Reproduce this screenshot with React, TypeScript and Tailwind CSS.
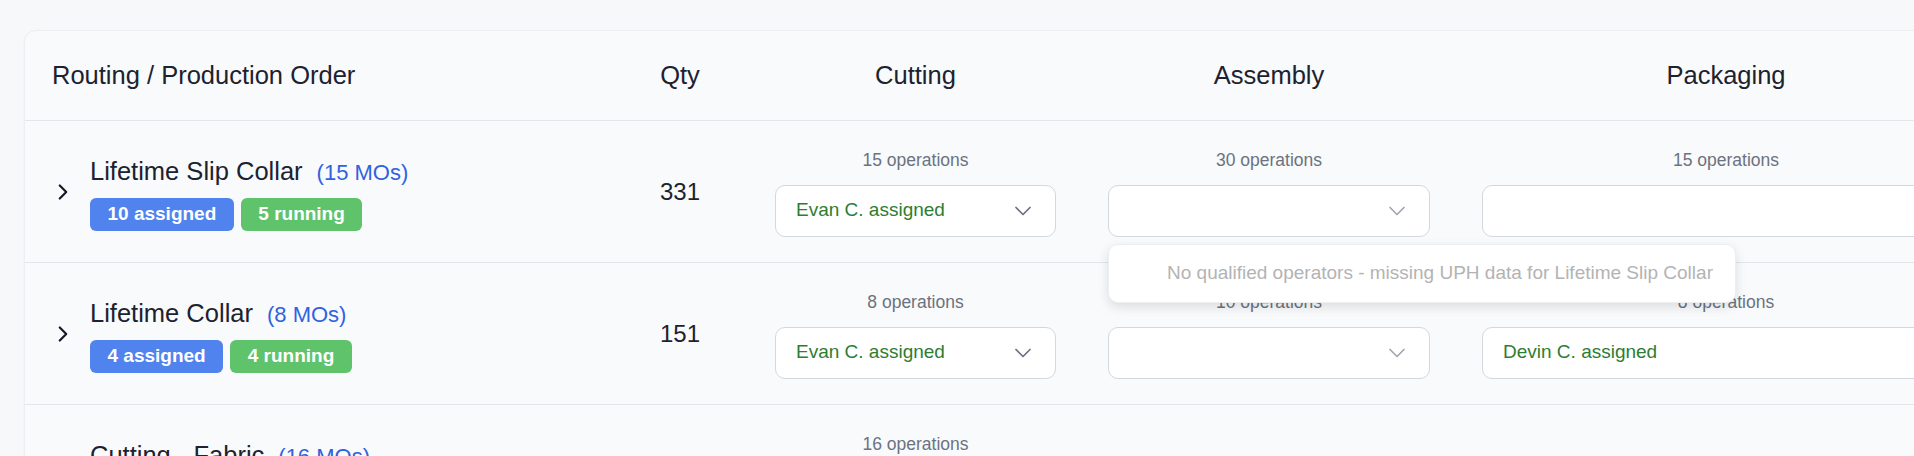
import { ChevronDown, ChevronRight } from "lucide-react";

type Stage = {
  ops?: string;
  value?: string;
  muted?: boolean;
  popover?: string;
};

type Row = {
  name: string;
  mos: string;
  qty: string;
  assigned: string;
  running: string;
  cutting: Stage;
  assembly: Stage;
  packaging: Stage;
};

const rows: Row[] = [
  {
    name: "Lifetime Slip Collar",
    mos: "(15 MOs)",
    qty: "331",
    assigned: "10 assigned",
    running: "5 running",
    cutting: { ops: "15 operations", value: "Evan C. assigned" },
    assembly: {
      ops: "30 operations",
      muted: true,
      popover: "No qualified operators - missing UPH data for Lifetime Slip Collar",
    },
    packaging: { ops: "15 operations" },
  },
  {
    name: "Lifetime Collar",
    mos: "(8 MOs)",
    qty: "151",
    assigned: "4 assigned",
    running: "4 running",
    cutting: { ops: "8 operations", value: "Evan C. assigned" },
    assembly: { ops: "10 operations", muted: true },
    packaging: { ops: "8 operations", value: "Devin C. assigned" },
  },
  {
    name: "Cutting - Fabric",
    mos: "(16 MOs)",
    qty: "",
    assigned: "",
    running: "",
    cutting: { ops: "16 operations", value: "Evan C. assigned" },
    assembly: {},
    packaging: {},
  },
];

function StageCell({ stage, width }: { stage: Stage; width: string }) {
  if (!stage.ops) return <div />;
  return (
    <div className="flex flex-col items-center justify-center pt-[3px]">
      <div className="text-[17.5px] leading-[21px] text-[#6b7280]">{stage.ops}</div>
      <div className={`relative mt-[14px] ${width}`}>
        <div className="flex h-[52px] items-center justify-between rounded-[10px] border border-[#d4d7dd] bg-white pl-[20px] pr-[18px]">
          <span className="text-[19px] text-[#2e7d32]">{stage.value}</span>
          <ChevronDown
            size={28}
            strokeWidth={1.5}
            className={stage.muted ? "text-[#a3a7ae]" : "text-[#6b7280]"}
          />
        </div>
        {stage.popover && (
          <div className="absolute left-0 top-full z-10 mt-[7px] flex h-[59px] w-[628px] items-center rounded-[10px] border border-[#eceef1] bg-white pl-[58px] pr-[19px] shadow-[0_4px_12px_rgba(0,0,0,0.12)]">
            <span className="whitespace-nowrap text-[19px] text-[#b3b3b3]">{stage.popover}</span>
          </div>
        )}
      </div>
    </div>
  );
}

export default function App() {
  return (
    <main
      className="h-[456px] w-full overflow-hidden bg-[#f7f8fa] pl-[24px] pt-[30px]"
      style={{ fontFamily: '"Liberation Sans", Arial, sans-serif' }}
    >
      <div className="w-[1972px] rounded-xl border border-[#eceef1] bg-[#f9fafb] shadow-[0_1px_3px_rgba(0,0,0,0.04)]">
        {/* Header */}
        <div className="grid h-[90px] grid-cols-[586px_138px_333px_374px_540px] items-center border-b border-[#e3e5e9] text-[25.5px] text-[#1c2230]">
          <div className="pl-[27px]">Routing / Production Order</div>
          <div className="text-center">Qty</div>
          <div className="text-center">Cutting</div>
          <div className="text-center">Assembly</div>
          <div className="text-center">Packaging</div>
        </div>

        {rows.map((row) => (
          <div
            key={row.name}
            className="grid h-[142px] grid-cols-[586px_138px_333px_374px_540px] border-b border-[#e3e5e9]"
          >
            <div className="flex items-center pl-[25px]">
              <ChevronRight size={26} strokeWidth={2} className="text-[#111827]" />
              <div className="ml-[14px] flex flex-col pt-[4px]">
                <div className="flex items-baseline leading-[30px]">
                  <span className="text-[25.5px] text-[#1c2230]">{row.name}</span>
                  <span className="ml-[14px] text-[22px] text-[#2f63e0]">{row.mos}</span>
                </div>
                <div className="mt-[10px] flex gap-[7px]">
                  <span className="flex h-[33px] items-center rounded-[6px] bg-[#5083ee] px-[17.5px] text-[19px] font-bold text-white">
                    {row.assigned}
                  </span>
                  <span className="flex h-[33px] items-center rounded-[6px] bg-[#5fc36b] px-[17.5px] text-[19px] font-bold text-white">
                    {row.running}
                  </span>
                </div>
              </div>
            </div>
            <div className="flex items-center justify-center text-[24px] text-[#1c2230]">{row.qty}</div>
            <StageCell stage={row.cutting} width="w-[281px]" />
            <StageCell stage={row.assembly} width="w-[322px]" />
            <StageCell stage={row.packaging} width="w-[488px]" />
          </div>
        ))}
      </div>
    </main>
  );
}
